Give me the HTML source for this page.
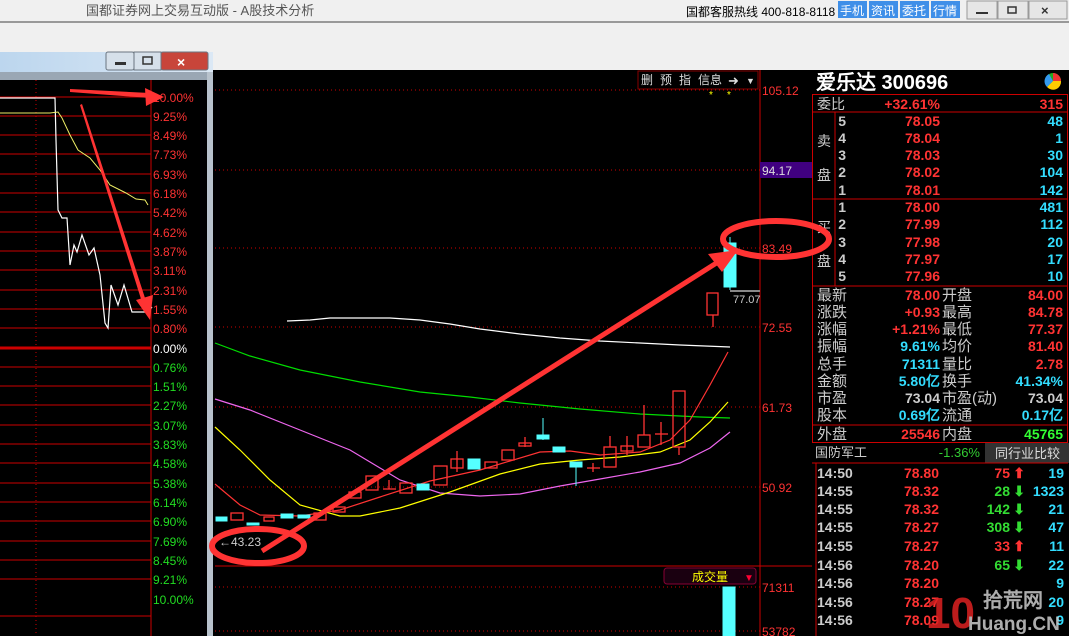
<!DOCTYPE html>
<html><head><meta charset="utf-8"><style>
body{margin:0;width:1069px;height:636px;overflow:hidden;background:#f0f0f0;font-family:"Liberation Sans","WenQuanYi Zen Hei",sans-serif}
svg{position:absolute;left:0;top:0}
text{font-family:"Liberation Sans","WenQuanYi Zen Hei",sans-serif}
.b text{font-weight:bold}
</style></head><body>
<svg width="1069" height="636" viewBox="0 0 1069 636" xmlns="http://www.w3.org/2000/svg">
<defs><linearGradient id="tb" x1="0" x2="1"><stop offset="0" stop-color="#bcd6ee"/><stop offset="1" stop-color="#dbe8f5"/></linearGradient></defs>
<rect x="0" y="0" width="1069" height="21" fill="#f0f0f0"/>
<text x="86" y="15" font-size="13" fill="#555">国都证券网上交易互动版 - A股技术分析</text>
<text x="686" y="16" font-size="12" fill="#000">国都客服热线 400-818-8118</text>
<g font-size="12" fill="#fff">
<rect x="838" y="1" width="29" height="17" fill="#3f8fe8"/><text x="840" y="15">手机</text>
<rect x="869" y="1" width="29" height="17" fill="#3f8fe8"/><text x="871" y="15">资讯</text>
<rect x="900" y="1" width="29" height="17" fill="#3f8fe8"/><text x="902" y="15">委托</text>
<rect x="931" y="1" width="29" height="17" fill="#3f8fe8"/><text x="933" y="15">行情</text>
</g>
<g fill="#e6e6e6" stroke="#999">
<rect x="967" y="1" width="30" height="18"/><rect x="998" y="1" width="30" height="18"/><rect x="1029" y="1" width="38" height="18"/></g>
<rect x="976" y="12" width="12" height="2" fill="#333"/>
<rect x="1008" y="7" width="8" height="6" fill="none" stroke="#333" stroke-width="1.5"/>
<text x="1041" y="15" font-size="13" fill="#333" font-weight="bold">×</text>
<rect x="0" y="21" width="1069" height="2" fill="#999"/>
<rect x="0" y="23" width="1069" height="47" fill="#f0f0f0"/>
<rect x="213" y="70" width="856" height="566" fill="#000"/>

<g stroke="#c00" stroke-dasharray="1,3" stroke-width="1">
<line x1="215" y1="90" x2="760" y2="90"/><line x1="215" y1="170" x2="760" y2="170"/>
<line x1="215" y1="248" x2="760" y2="248"/><line x1="215" y1="327" x2="760" y2="327"/>
<line x1="215" y1="407" x2="760" y2="407"/><line x1="215" y1="487" x2="760" y2="487"/>
<line x1="215" y1="587" x2="760" y2="587"/><line x1="215" y1="631" x2="760" y2="631"/>
</g>
<line x1="760" y1="70" x2="760" y2="636" stroke="#c00"/>
<line x1="215" y1="566" x2="812" y2="566" stroke="#c00"/>
<g font-size="12" fill="#ddd">
<rect x="638" y="71" width="120" height="18" fill="#000" stroke="#800"/>
<text x="641" y="84">删</text><text x="660" y="84">预</text><text x="679" y="84">指</text><text x="698" y="84">信息</text>
<text x="728" y="85" font-size="13">➜</text><text x="746" y="84" font-size="9">▼</text>
<text x="709" y="98" fill="#ff0" font-size="10">*</text><text x="727" y="98" fill="#ff0" font-size="10">*</text>
</g>
<g font-size="12" fill="#f33">
<text x="762" y="95">105.12</text>
<rect x="760" y="162" width="52" height="16" fill="#400080"/><text x="762" y="175" fill="#ddd">94.17</text>
<text x="762" y="253">83.49</text><text x="762" y="332">72.55</text><text x="762" y="412">61.73</text>
<text x="762" y="492">50.92</text><text x="762" y="592">71311</text><text x="762" y="636">53782</text>
</g>
<g fill="none" stroke-width="1.2">
<polyline stroke="#fff" points="287,321 310,320 330,318 390,318 420,320 450,324 480,329 520,334 560,338 600,341 640,343 680,345 730,347"/>
<polyline stroke="#0d0" points="215,343 250,356 300,370 360,382 420,392 470,397 520,403 580,409 640,414 700,417 730,418"/>
<polyline stroke="#e6e" points="215,399 250,410 300,430 350,450 400,480 440,493 480,496 520,494 560,486 600,479 640,472 680,463 710,448 730,432"/>
<polyline stroke="#ff0" points="215,427 240,450 270,480 300,505 340,516 360,516 400,508 450,492 500,474 540,464 580,460 620,457 660,452 690,440 710,422 728,402"/>
<polyline stroke="#f33" points="215,484 240,505 260,515 300,516 340,510 380,497 430,481 480,470 540,452 570,451 600,455 640,452 670,440 690,420 710,385 728,352"/>
</g>
<g stroke="#f33" fill="none" stroke-width="1.3">
<rect x="231" y="513" width="12" height="7"/><rect x="264" y="517" width="10" height="4"/>
<rect x="314" y="513" width="12" height="7"/><rect x="333" y="507" width="12" height="5"/>
<rect x="349" y="492" width="12" height="6"/><rect x="366" y="476" width="12" height="14"/>
<line x1="383" y1="489" x2="396" y2="489"/><line x1="389" y1="480" x2="389" y2="489"/>
<rect x="400" y="483" width="12" height="10"/>
<rect x="434" y="466" width="13" height="19"/>
<rect x="451" y="459" width="12" height="9"/><line x1="457" y1="451" x2="457" y2="472"/>
<rect x="485" y="462" width="12" height="6"/>
<rect x="502" y="450" width="12" height="10"/>
<rect x="519" y="443" width="12" height="3"/><line x1="525" y1="437" x2="525" y2="447"/>
<line x1="587" y1="468" x2="600" y2="468"/><line x1="593" y1="463" x2="593" y2="472"/>
<rect x="604" y="447" width="12" height="20"/><line x1="610" y1="436" x2="610" y2="447"/>
<rect x="621" y="446" width="12" height="5"/><line x1="627" y1="436" x2="627" y2="455"/>
<rect x="638" y="435" width="12" height="12"/><line x1="644" y1="405" x2="644" y2="435"/>
<line x1="655" y1="434" x2="668" y2="434"/><line x1="661" y1="422" x2="661" y2="445"/>
<rect x="673" y="391" width="12" height="56"/><line x1="679" y1="447" x2="679" y2="455"/>
<rect x="707" y="293" width="11" height="22"/><line x1="713" y1="315" x2="713" y2="327"/>
</g>
<g fill="#5ff" stroke="#5ff">
<rect x="216" y="517" width="11" height="4"/><rect x="247" y="523" width="12" height="2"/>
<rect x="281" y="514" width="12" height="4"/><rect x="298" y="515" width="12" height="3"/>
<rect x="417" y="484" width="12" height="6"/><rect x="468" y="459" width="12" height="10"/>
<rect x="537" y="435" width="12" height="4"/><line x1="543" y1="418" x2="543" y2="440"/>
<rect x="553" y="447" width="12" height="5"/>
<rect x="570" y="462" width="12" height="5"/><line x1="576" y1="467" x2="576" y2="486"/>
<rect x="724" y="243" width="12" height="44"/><line x1="730" y1="237" x2="730" y2="290"/>
<rect x="723" y="587" width="12" height="49"/>
</g>
<line x1="730" y1="291" x2="760" y2="291" stroke="#888" stroke-width="2"/>
<text x="733" y="303" font-size="11" fill="#ccc">77.07</text>
<text x="219" y="546" font-size="12" fill="#ccc">←43.23</text>
<rect x="664" y="568" width="92" height="16" rx="3" fill="#1a0010" stroke="#803"/>
<text x="692" y="581" font-size="12" fill="#ff0">成交量</text><text x="744" y="581" font-size="10" fill="#f03">▼</text>

<g font-size="14" fill="#ccc">
<text x="816" y="89" font-size="20" font-weight="bold" fill="#fff" font-family="Liberation Serif,'Noto Serif CJK SC',serif">爱乐达 300696</text>
<circle cx="1053" cy="81" r="8" fill="#2a2"/><path d="M1053 81 L1053 73 A8 8 0 0 1 1061 81Z" fill="#e33"/><path d="M1053 81 L1061 81 A8 8 0 0 1 1047 87Z" fill="#fc0"/><path d="M1053 81 L1047 87 A8 8 0 0 1 1049 74Z" fill="#39e"/>
<rect x="812.5" y="94.5" width="255" height="348" fill="none" stroke="#c00"/>
<line x1="812" y1="112" x2="1068" y2="112" stroke="#c00"/>
<line x1="812" y1="199" x2="1068" y2="199" stroke="#c00"/>
<line x1="812" y1="286" x2="1068" y2="286" stroke="#c00"/>
<line x1="835" y1="112" x2="835" y2="286" stroke="#c00"/>
<line x1="812" y1="425" x2="1068" y2="425" stroke="#c00"/>
<text x="817" y="109">委比</text>
<g class="b"><text x="940" y="109" text-anchor="end" fill="#f33">+32.61%</text><text x="1063" y="109" text-anchor="end" fill="#f33">315</text></g>
<text x="817" y="146">卖</text><text x="817" y="180">盘</text><text x="817" y="232">买</text><text x="817" y="266">盘</text>
<g text-anchor="end" class="b">
<text x="846" y="126" fill="#ccc">5</text><text x="940" y="126" fill="#f33">78.05</text><text x="1063" y="126" fill="#3df">48</text>
<text x="846" y="143">4</text><text x="940" y="143" fill="#f33">78.04</text><text x="1063" y="143" fill="#3df">1</text>
<text x="846" y="160">3</text><text x="940" y="160" fill="#f33">78.03</text><text x="1063" y="160" fill="#3df">30</text>
<text x="846" y="177">2</text><text x="940" y="177" fill="#f33">78.02</text><text x="1063" y="177" fill="#3df">104</text>
<text x="846" y="195">1</text><text x="940" y="195" fill="#f33">78.01</text><text x="1063" y="195" fill="#3df">142</text>
<text x="846" y="212">1</text><text x="940" y="212" fill="#f33">78.00</text><text x="1063" y="212" fill="#3df">481</text>
<text x="846" y="229">2</text><text x="940" y="229" fill="#f33">77.99</text><text x="1063" y="229" fill="#3df">112</text>
<text x="846" y="247">3</text><text x="940" y="247" fill="#f33">77.98</text><text x="1063" y="247" fill="#3df">20</text>
<text x="846" y="264">4</text><text x="940" y="264" fill="#f33">77.97</text><text x="1063" y="264" fill="#3df">17</text>
<text x="846" y="281">5</text><text x="940" y="281" fill="#f33">77.96</text><text x="1063" y="281" fill="#3df">10</text>
</g>
<g font-size="15">
<text x="817" y="300">最新</text><text x="942" y="300">开盘</text>
<text x="817" y="317">涨跌</text><text x="942" y="317">最高</text>
<text x="817" y="334">涨幅</text><text x="942" y="334">最低</text>
<text x="817" y="351">振幅</text><text x="942" y="351">均价</text>
<text x="817" y="369">总手</text><text x="942" y="369">量比</text>
<text x="817" y="386">金额</text><text x="942" y="386">换手</text>
<text x="817" y="403">市盈</text><text x="942" y="403">市盈(动)</text>
<text x="817" y="420">股本</text><text x="942" y="420">流通</text>
<text x="817" y="439">外盘</text><text x="942" y="439">内盘</text>
</g>
<g text-anchor="end" class="b">
<text x="940" y="300" fill="#f33">78.00</text><text x="1063" y="300" fill="#f33">84.00</text>
<text x="940" y="317" fill="#f33">+0.93</text><text x="1063" y="317" fill="#f33">84.78</text>
<text x="940" y="334" fill="#f33">+1.21%</text><text x="1063" y="334" fill="#f33">77.37</text>
<text x="940" y="351" fill="#3df">9.61%</text><text x="1063" y="351" fill="#f33">81.40</text>
<text x="940" y="369" fill="#3df">71311</text><text x="1063" y="369" fill="#f33">2.78</text>
<text x="940" y="386" fill="#3df">5.80亿</text><text x="1063" y="386" fill="#3df">41.34%</text>
<text x="940" y="403">73.04</text><text x="1063" y="403">73.04</text>
<text x="940" y="420" fill="#3df">0.69亿</text><text x="1063" y="420" fill="#3df">0.17亿</text>
<text x="940" y="439" fill="#f33">25546</text><text x="1063" y="439" fill="#3f3">45765</text>
</g>
<text x="815" y="457" font-size="13">国防军工</text><text x="980" y="457" font-size="13" fill="#3c3" text-anchor="end">-1.36%</text>
<rect x="985" y="443" width="84" height="20" fill="#333"/><text x="995" y="458" font-size="13" fill="#ddd">同行业比较</text>
<line x1="812" y1="463" x2="1068" y2="463" stroke="#c00"/>
<line x1="816" y1="463" x2="816" y2="636" stroke="#c00"/>
<g class="b">
<text x="817" y="478">14:50</text><text x="817" y="496">14:55</text><text x="817" y="514">14:55</text><text x="817" y="532">14:55</text><text x="817" y="551">14:55</text><text x="817" y="570">14:56</text><text x="817" y="588">14:56</text><text x="817" y="607">14:56</text><text x="817" y="625">14:56</text>
</g>
<g text-anchor="end" fill="#f33" class="b">
<text x="939" y="478">78.80</text><text x="939" y="496">78.32</text><text x="939" y="514">78.32</text><text x="939" y="532">78.27</text><text x="939" y="551">78.27</text><text x="939" y="570">78.20</text><text x="939" y="588">78.20</text><text x="939" y="607">78.27</text><text x="939" y="625">78.09</text>
</g>
<g text-anchor="end" class="b">
<text x="1010" y="478" fill="#f33">75</text><text x="1010" y="496" fill="#3d3">28</text><text x="1010" y="514" fill="#3d3">142</text><text x="1010" y="532" fill="#3d3">308</text><text x="1010" y="551" fill="#f33">33</text><text x="1010" y="570" fill="#3d3">65</text>
<text x="1025" y="478" fill="#f33">⬆</text><text x="1025" y="496" fill="#3d3">⬇</text><text x="1025" y="514" fill="#3d3">⬇</text><text x="1025" y="532" fill="#3d3">⬇</text><text x="1025" y="551" fill="#f33">⬆</text><text x="1025" y="570" fill="#3d3">⬇</text>
<text x="1064" y="478" fill="#3df">19</text><text x="1064" y="496" fill="#3df">1323</text><text x="1064" y="514" fill="#3df">21</text><text x="1064" y="532" fill="#3df">47</text><text x="1064" y="551" fill="#3df">11</text><text x="1064" y="570" fill="#3df">22</text><text x="1064" y="588" fill="#3df">9</text><text x="1064" y="607" fill="#3df">20</text><text x="1064" y="625" fill="#3df">9</text>
</g>
</g>
<g opacity="0.85">
<text x="926" y="628" font-size="44" font-weight="bold" fill="#d22" font-family="Liberation Sans,sans-serif">10</text>
<text x="983" y="607" font-size="20" font-weight="bold" fill="#ccc">拾荒网</text>
<text x="968" y="630" font-size="19" font-weight="bold" fill="#ccc">Huang.CN</text>
</g>

<rect x="0" y="52" width="213" height="584" fill="#c9d4de"/>
<rect x="0" y="52" width="213" height="20" fill="url(#tb)"/>
<rect x="0" y="72" width="213" height="8" fill="#9aa7b4"/>
<rect x="207" y="72" width="6" height="564" fill="#b8c2cc"/>
<rect x="0" y="80" width="207" height="556" fill="#000"/>
<g stroke="#6a7580">
<rect x="106" y="52" width="28" height="18" rx="2" fill="#d6e0ea"/><rect x="134" y="52" width="27" height="18" fill="#d6e0ea"/>
<rect x="161" y="52" width="47" height="18" rx="2" fill="#c8453a"/></g>
<rect x="115" y="62" width="11" height="3" fill="#333"/>
<rect x="143" y="57" width="9" height="7" fill="none" stroke="#333" stroke-width="1.5"/>
<text x="177" y="67" font-size="14" font-weight="bold" fill="#fff">×</text>
<line x1="151" y1="80" x2="151" y2="636" stroke="#c00"/>
<line x1="36" y1="80" x2="36" y2="636" stroke="#c00" stroke-dasharray="1,3"/>
<g stroke="#c00" stroke-width="1">
<line x1="0" y1="97" x2="151" y2="97"/><line x1="0" y1="116" x2="151" y2="116"/><line x1="0" y1="135" x2="151" y2="135"/><line x1="0" y1="154" x2="151" y2="154"/><line x1="0" y1="174" x2="151" y2="174"/><line x1="0" y1="193" x2="151" y2="193"/><line x1="0" y1="212" x2="151" y2="212"/><line x1="0" y1="232" x2="151" y2="232"/><line x1="0" y1="251" x2="151" y2="251"/><line x1="0" y1="270" x2="151" y2="270"/><line x1="0" y1="290" x2="151" y2="290"/><line x1="0" y1="309" x2="151" y2="309"/><line x1="0" y1="328" x2="151" y2="328"/>
<line x1="0" y1="348" x2="151" y2="348" stroke-width="3"/>
<line x1="0" y1="367" x2="151" y2="367"/><line x1="0" y1="386" x2="151" y2="386"/><line x1="0" y1="405" x2="151" y2="405"/><line x1="0" y1="425" x2="151" y2="425"/><line x1="0" y1="444" x2="151" y2="444"/><line x1="0" y1="463" x2="151" y2="463"/><line x1="0" y1="483" x2="151" y2="483"/><line x1="0" y1="502" x2="151" y2="502"/><line x1="0" y1="521" x2="151" y2="521"/><line x1="0" y1="541" x2="151" y2="541"/><line x1="0" y1="560" x2="151" y2="560"/><line x1="0" y1="579" x2="151" y2="579"/><line x1="0" y1="616" x2="151" y2="616"/>
</g>
<g font-size="12">
<g fill="#f33">
<text x="153" y="102">10.00%</text><text x="153" y="121">9.25%</text><text x="153" y="140">8.49%</text><text x="153" y="159">7.73%</text><text x="153" y="179">6.93%</text><text x="153" y="198">6.18%</text><text x="153" y="217">5.42%</text><text x="153" y="237">4.62%</text><text x="153" y="256">3.87%</text><text x="153" y="275">3.11%</text><text x="153" y="295">2.31%</text><text x="153" y="314">1.55%</text><text x="153" y="333">0.80%</text></g>
<text x="153" y="353" fill="#fff">0.00%</text>
<g fill="#2d2">
<text x="153" y="372">0.76%</text><text x="153" y="391">1.51%</text><text x="153" y="410">2.27%</text><text x="153" y="430">3.07%</text><text x="153" y="449">3.83%</text><text x="153" y="468">4.58%</text><text x="153" y="488">5.38%</text><text x="153" y="507">6.14%</text><text x="153" y="526">6.90%</text><text x="153" y="546">7.69%</text><text x="153" y="565">8.45%</text><text x="153" y="584">9.21%</text><text x="153" y="604">10.00%</text></g>
</g>
<polyline fill="none" stroke="#fff" stroke-width="1.2" points="0,98 55,98 56,140 58,210 62,218 67,218 70,265 74,245 77,252 82,235 89,255 94,248 100,275 105,323 108,328 111,285 118,305 124,285 132,312 148,312 152,307"/>
<polyline fill="none" stroke="#ee6" stroke-width="1" points="0,113 50,113 58,112 62,118 70,135 78,150 90,158 100,170 110,185 126,193 136,199 145,200 148,205"/>

<g fill="none" stroke="#f33" stroke-width="6">
<ellipse cx="258" cy="546" rx="46" ry="17"/>
<ellipse cx="776" cy="239" rx="53" ry="18"/>
</g>
<line x1="262" y1="551" x2="718" y2="262" stroke="#f33" stroke-width="5"/>
<polygon points="738,250 708,254 722,272" fill="#f33"/>
<polygon points="70,89 150,93 150,98 70,92" fill="#f33"/>
<polygon points="164,97 145,88 146,106" fill="#f33"/>
<polygon points="80,105 82,104 145,298 141,299" fill="#f33"/>
<polygon points="150,320 136,300 153,295" fill="#f33"/>
</svg>
</body></html>
